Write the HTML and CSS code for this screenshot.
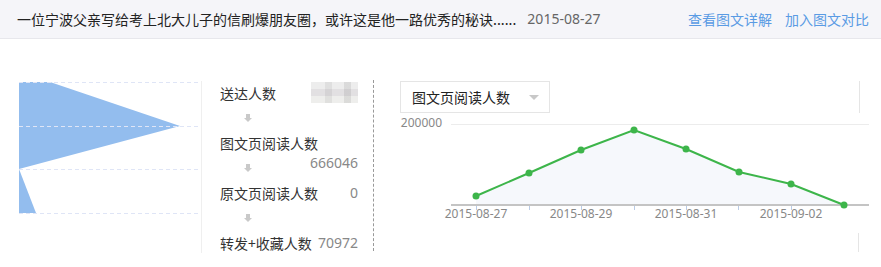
FILE: index.html
```html
<!DOCTYPE html>
<html lang="zh-CN">
<head>
    <meta charset="UTF-8">
    <title>图文分析</title>
    <link rel="stylesheet" href="styles.css">
</head>
<body>
    <div class="article-bar">
        <span class="article-title">一位宁波父亲写给考上北大儿子的信刷爆朋友圈，或许这是他一路优秀的秘诀......</span>
        <span class="article-date">2015-08-27</span>
        <div class="article-links">
            <a href="#">查看图文详解</a>
            <a href="#">加入图文对比</a>
        </div>
    </div>

    <div class="report">
        <!-- funnel -->
        <div class="funnel">
            <svg width="200" height="140" viewBox="0 0 200 140">
                <polygon points="19,1 50,1 180,45 19,88" fill="#93bdee"/>
                <polygon points="19,88 36,132 19,132" fill="#93bdee"/>
                <g stroke="#dfe5f6" stroke-width="1" stroke-dasharray="4 3">
                    <line x1="19" y1="1.5" x2="200" y2="1.5"/>
                    <line x1="19" y1="45.5" x2="200" y2="45.5"/>
                    <line x1="19" y1="88.5" x2="200" y2="88.5"/>
                    <line x1="19" y1="132.5" x2="200" y2="132.5"/>
                </g>
            </svg>
        </div>

        <ul class="steps">
            <li class="step"><span>送达人数</span><span class="blurred"></span></li>
            <li class="step"><i class="arrow"></i></li>
            <li class="step"><span>图文页阅读人数</span></li>
            <li class="step"><i class="arrow"></i><span class="num num-up">666046</span></li>
            <li class="step"><span>原文页阅读人数</span><span class="num">0</span></li>
            <li class="step"><i class="arrow"></i></li>
            <li class="step"><span>转发+收藏人数</span><span class="num">70972</span></li>
        </ul>

        <div class="trend">
            <div class="trend-head">
                <div class="select">图文页阅读人数<i class="caret"></i></div>
                <div class="divider"></div>
            </div>
            <svg class="trend-chart" width="506" height="145" viewBox="0 0 506 145">
                <text x="68" y="13" text-anchor="end" class="axis-label">200000</text>
                <line x1="77" y1="10.5" x2="495" y2="10.5" stroke="#ececec"/>
                <polygon points="102,82 155,59 207,36 260,16 312,35 365,58 417,70 470,91 102,91" fill="#f6f8fc"/>
                <line x1="77" y1="91" x2="495" y2="91" stroke="#c4c4c4" stroke-width="2"/>
                <g stroke="#b9cbe6">
                    <line x1="102.5" y1="92" x2="102.5" y2="96"/>
                    <line x1="155.5" y1="92" x2="155.5" y2="96"/>
                    <line x1="207.5" y1="92" x2="207.5" y2="96"/>
                    <line x1="260.5" y1="92" x2="260.5" y2="96"/>
                    <line x1="312.5" y1="92" x2="312.5" y2="96"/>
                    <line x1="364.5" y1="92" x2="364.5" y2="96"/>
                    <line x1="417.5" y1="92" x2="417.5" y2="96"/>
                </g>
                <polyline points="102,82 155,59 207,36 260,16 312,35 365,58 417,70 470,91" fill="none" stroke="#3db54a" stroke-width="2"/>
                <g fill="#3db54a">
                    <circle cx="102" cy="82" r="3.5"/>
                    <circle cx="155" cy="59" r="3.5"/>
                    <circle cx="207" cy="36" r="3.5"/>
                    <circle cx="260" cy="16" r="3.5"/>
                    <circle cx="312" cy="35" r="3.5"/>
                    <circle cx="365" cy="58" r="3.5"/>
                    <circle cx="417" cy="70" r="3.5"/>
                    <circle cx="470" cy="91" r="3.5"/>
                </g>
                <g class="axis-label" text-anchor="middle">
                    <text x="102" y="104">2015-08-27</text>
                    <text x="207" y="104">2015-08-29</text>
                    <text x="312" y="104">2015-08-31</text>
                    <text x="417" y="104">2015-09-02</text>
                </g>
                <line x1="484.5" y1="119" x2="484.5" y2="138" stroke="#e5e5e5"/>
            </svg>
        </div>
    </div>
</body>
</html>
```

FILE: styles.css
```css
/* Reset */
* {
    margin: 0;
    padding: 0;
    box-sizing: border-box;
}

body {
    font-family: "Noto Sans CJK SC", "Noto Sans", sans-serif;
    font-size: 14px;
    color: #333;
    background: #fff;
    width: 881px;
    height: 267px;
    overflow: hidden;
}

/* Article bar */
.article-bar {
    display: flex;
    align-items: center;
    height: 39px;
    padding: 0 12px 0 17px;
    background: #f5f5f9;
    border-bottom: 1px solid #e7e7ec;
    line-height: 20px;
}

.article-title {
    color: #222;
}

.article-date {
    margin-left: 11px;
    color: #666;
    font-family: "Noto Sans", sans-serif;
}

.article-links {
    margin-left: auto;
    display: flex;
    gap: 13px;
}

.article-links a {
    color: #5a9be4;
    text-decoration: none;
}

/* Report area */
.report {
    display: flex;
    align-items: flex-start;
    padding-top: 42px;
}

.funnel {
    width: 202px;
    height: 172px;
    border-right: 1px solid #efefef;
}

.funnel svg {
    display: block;
}

/* Steps list */
.steps {
    list-style: none;
    width: 172px;
    height: 171px;
    padding: 0 15px 0 18px;
    border-right: 1px dashed #999;
    margin-top: -1px;
}

.step {
    display: flex;
    justify-content: space-between;
    align-items: center;
    height: 25px;
    line-height: 20px;
}

.arrow {
    position: relative;
    width: 8px;
    height: 8px;
    margin-left: 24px;
}

.arrow::before {
    content: "";
    position: absolute;
    left: 2px;
    top: 0;
    width: 4px;
    height: 4px;
    background: #c9c9c9;
}

.arrow::after {
    content: "";
    position: absolute;
    left: 0;
    top: 4px;
    border-left: 4px solid transparent;
    border-right: 4px solid transparent;
    border-top: 4px solid #c9c9c9;
}

.num {
    color: #888;
    font-family: "Noto Sans", sans-serif;
}

.num-up {
    margin-top: -9px;
}

.blurred {
    width: 47px;
    height: 21px;
    background:
        linear-gradient(90deg, transparent 0 30%, rgba(0,0,0,0.06) 30% 45%, transparent 45% 70%, rgba(0,0,0,0.08) 70% 85%, transparent 85%),
        linear-gradient(180deg, #ededed 0 33%, #e2e0e2 33% 66%, #eeeeec 66%);
}

/* Trend chart */
.trend {
    flex: 1;
    padding-left: 26px;
}

.trend-head {
    display: flex;
    height: 33px;
    padding-right: 21px;
}

.select {
    position: relative;
    width: 150px;
    height: 32px;
    line-height: 30px;
    padding-left: 11px;
    border: 1px solid #e5e5e5;
    color: #222;
}

.caret {
    position: absolute;
    right: 10px;
    top: 13px;
    border-left: 5px solid transparent;
    border-right: 5px solid transparent;
    border-top: 5px solid #c8c8c8;
}

.divider {
    margin-left: auto;
    width: 1px;
    height: 32px;
    background: #e5e5e5;
}

.trend-chart {
    display: block;
    margin-left: -26px;
}

.axis-label {
    font-family: "Noto Sans", sans-serif;
    font-size: 12px;
    fill: #888;
}
```
